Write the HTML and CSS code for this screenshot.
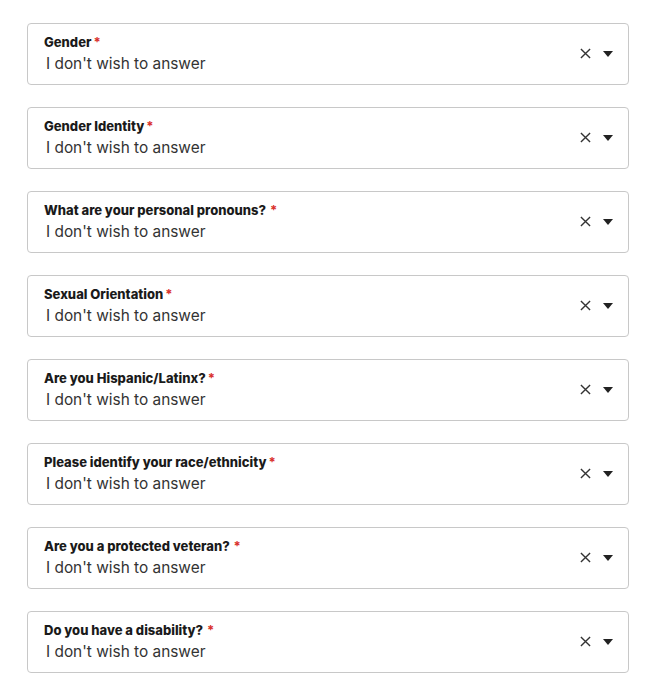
FILE: index.html
```html
<!DOCTYPE html>
<html>
<head>
<meta charset="utf-8">
<link rel="stylesheet" href="styles.css">
</head>
<body>
<div class="form">
  <div class="field">
    <div class="text"><div class="label">Gender<span class="req">*</span></div><div class="value">I don't wish to answer</div></div>
    <div class="icons"><svg class="clear" viewBox="0 0 12 12"><path d="M1 1L11 11M11 1L1 11"/></svg><svg class="caret" viewBox="0 0 10 6"><path d="M0 0H10L5 6Z"/></svg></div>
  </div>
  <div class="field">
    <div class="text"><div class="label">Gender Identity<span class="req">*</span></div><div class="value">I don't wish to answer</div></div>
    <div class="icons"><svg class="clear" viewBox="0 0 12 12"><path d="M1 1L11 11M11 1L1 11"/></svg><svg class="caret" viewBox="0 0 10 6"><path d="M0 0H10L5 6Z"/></svg></div>
  </div>
  <div class="field">
    <div class="text"><div class="label">What are your personal pronouns? <span class="req sp">*</span></div><div class="value">I don't wish to answer</div></div>
    <div class="icons"><svg class="clear" viewBox="0 0 12 12"><path d="M1 1L11 11M11 1L1 11"/></svg><svg class="caret" viewBox="0 0 10 6"><path d="M0 0H10L5 6Z"/></svg></div>
  </div>
  <div class="field">
    <div class="text"><div class="label">Sexual Orientation<span class="req">*</span></div><div class="value">I don't wish to answer</div></div>
    <div class="icons"><svg class="clear" viewBox="0 0 12 12"><path d="M1 1L11 11M11 1L1 11"/></svg><svg class="caret" viewBox="0 0 10 6"><path d="M0 0H10L5 6Z"/></svg></div>
  </div>
  <div class="field">
    <div class="text"><div class="label">Are you Hispanic/Latinx?<span class="req">*</span></div><div class="value">I don't wish to answer</div></div>
    <div class="icons"><svg class="clear" viewBox="0 0 12 12"><path d="M1 1L11 11M11 1L1 11"/></svg><svg class="caret" viewBox="0 0 10 6"><path d="M0 0H10L5 6Z"/></svg></div>
  </div>
  <div class="field">
    <div class="text"><div class="label">Please identify your race/ethnicity<span class="req">*</span></div><div class="value">I don't wish to answer</div></div>
    <div class="icons"><svg class="clear" viewBox="0 0 12 12"><path d="M1 1L11 11M11 1L1 11"/></svg><svg class="caret" viewBox="0 0 10 6"><path d="M0 0H10L5 6Z"/></svg></div>
  </div>
  <div class="field">
    <div class="text"><div class="label">Are you a protected veteran? <span class="req sp">*</span></div><div class="value">I don't wish to answer</div></div>
    <div class="icons"><svg class="clear" viewBox="0 0 12 12"><path d="M1 1L11 11M11 1L1 11"/></svg><svg class="caret" viewBox="0 0 10 6"><path d="M0 0H10L5 6Z"/></svg></div>
  </div>
  <div class="field">
    <div class="text"><div class="label">Do you have a disability? <span class="req sp">*</span></div><div class="value">I don't wish to answer</div></div>
    <div class="icons"><svg class="clear" viewBox="0 0 12 12"><path d="M1 1L11 11M11 1L1 11"/></svg><svg class="caret" viewBox="0 0 10 6"><path d="M0 0H10L5 6Z"/></svg></div>
  </div>
</div>
</body>
</html>
```
FILE: styles.css
```css
html, body {
  margin: 0;
  padding: 0;
  background: #fff;
}
body {
  font-family: Inter, "Noto Sans", sans-serif;
  color: #222;
}
.form {
  display: flex;
  flex-direction: column;
  gap: 22px;
  padding: 23px 25px 0 27px;
}
.field {
  height: 60px;
  border: 1px solid #c8c8c8;
  border-radius: 4px;
  display: flex;
  align-items: center;
  justify-content: space-between;
  padding: 0 15px 0 16px;
}
.text {
  display: flex;
  flex-direction: column;
  padding-top: 1px;
}
.label {
  font-size: 13px;
  font-weight: 800;
  line-height: 16px;
  color: #1a1a1a;
}
.req {
  color: #d9302c;
  font-weight: 700;
  margin-left: 2px;
}
.req.sp {
  margin-left: 1px;
}
.value {
  font-size: 15.4px;
  line-height: 22px;
  margin-top: 3px;
  margin-left: 2px;
  color: #333;
}
.icons {
  display: flex;
  align-items: center;
  gap: 12px;
  margin-top: -1px;
}
.clear {
  width: 11px;
  height: 11px;
  fill: none;
  stroke: #333;
  stroke-width: 1.5;
}
.caret {
  width: 10px;
  height: 6px;
  fill: #222;
}
```
